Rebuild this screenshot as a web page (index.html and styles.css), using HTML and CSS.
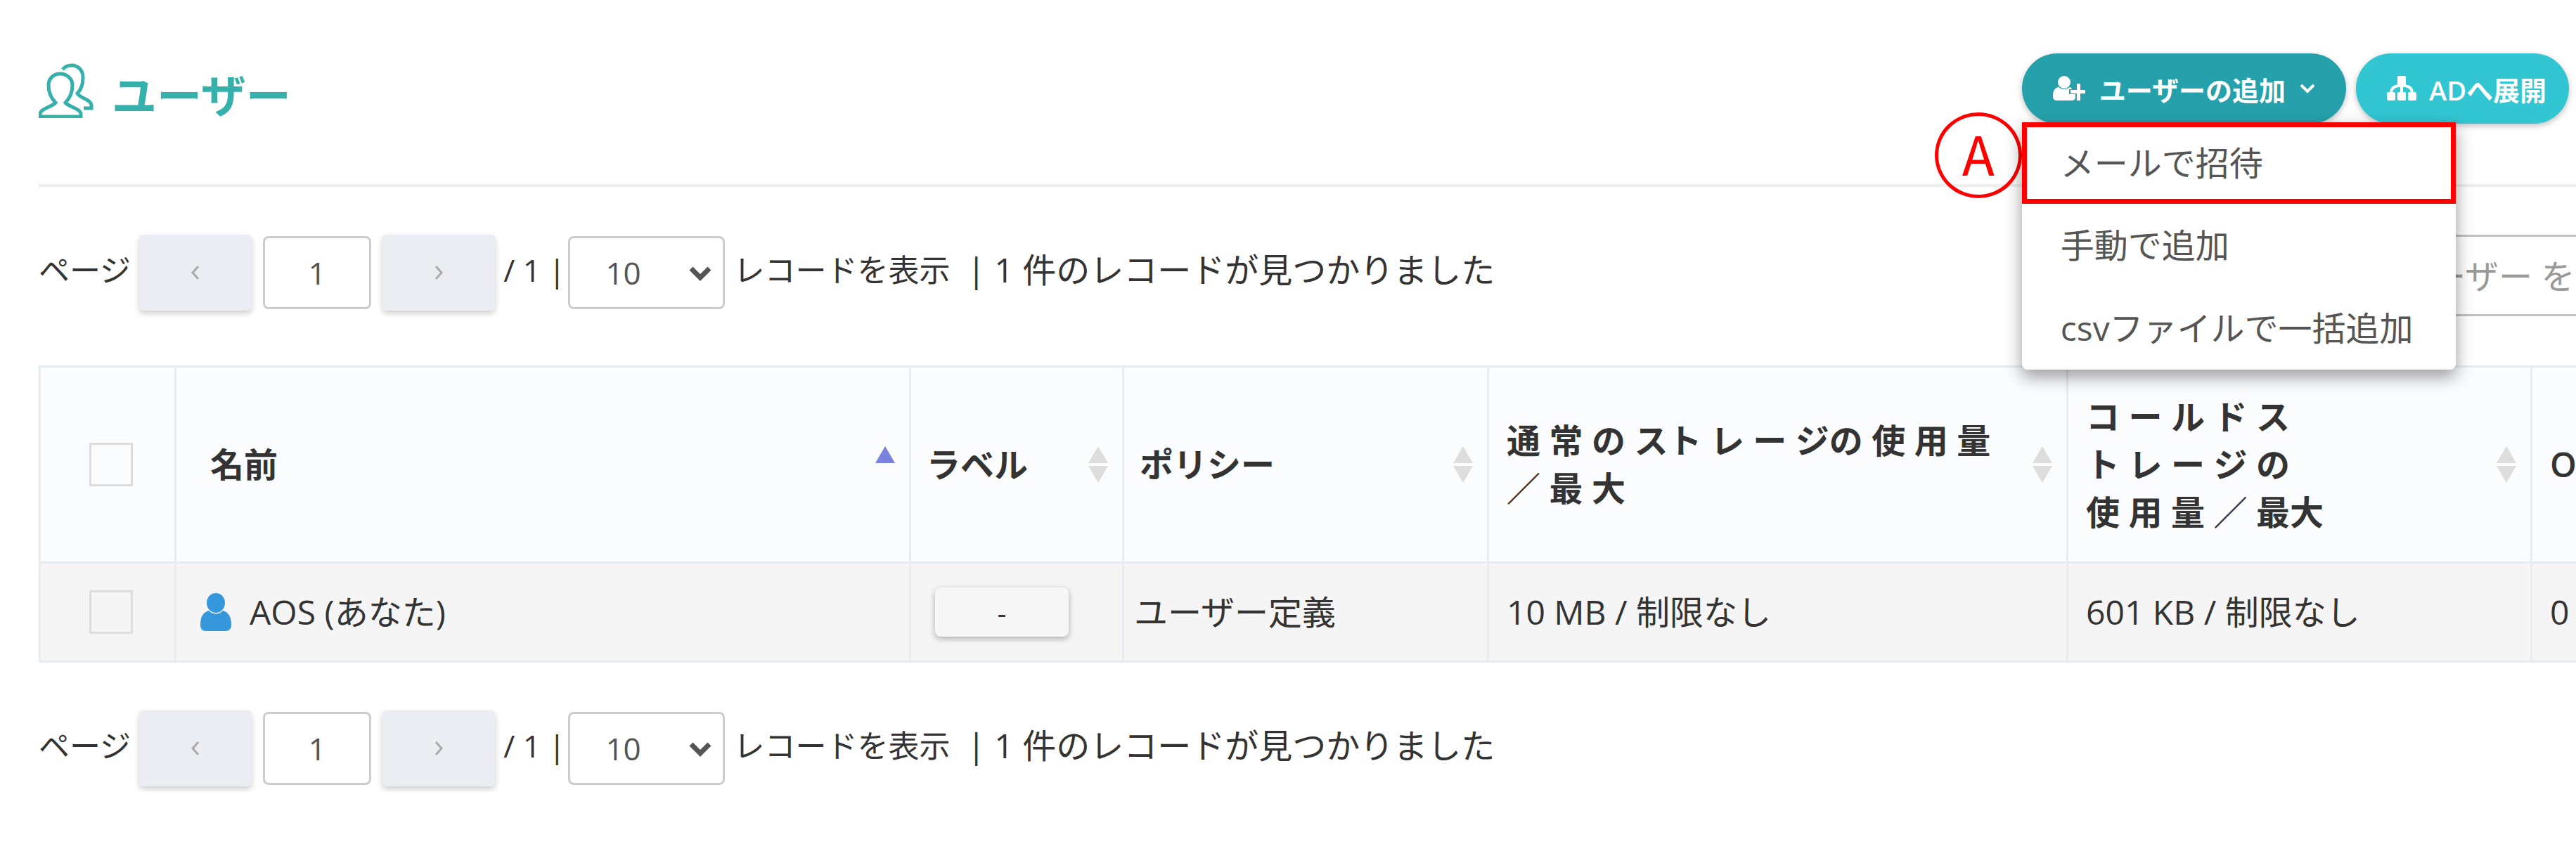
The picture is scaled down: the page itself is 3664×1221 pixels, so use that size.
FILE: index.html
```html
<!DOCTYPE html>
<html lang="ja">
<head>
    <meta charset="UTF-8">
    <meta name="viewport" content="width=device-width, initial-scale=1.0">
    <title>ユーザー</title>
    <link rel="stylesheet" href="styles.css">
</head>
<body>
    <header class="page-header">
        <h1 class="title">
            <svg class="title-icon" viewBox="0 0 78 78">
                <path d="M30.500 15C21 15 14 22 14 31C14 41 18 50 24 56C20 62 3 64 2 72V76H60V72C59 64 42 62 38 56C44 50 48 41 48 31C48 22 40 15 30.500 15Z"/>
                <path d="M34 9C37 5 42 3 47 3C56 3 63 10 63 20C63 30 61 37 55 43C59 50 73 51 75 59V64H64"/>
            </svg>
            ユーザー
        </h1>

        <div class="actions">
            <div class="dropdown">
                <button type="button" class="btn-round btn-add">
                    <svg class="icon-add" viewBox="0 0 46 36">
                        <ellipse cx="16" cy="9" rx="9" ry="9"/>
                        <path d="M8 16C2 17 0 22 0 29C0 33 2 35 6 35H27C29 35 31 34 32 32V26H23V19H27C26 17 25 16 24 16C19 20 13 20 8 16Z"/>
                        <path d="M34 11H39V20H46V25H39V35H34V25H25V20H34Z"/>
                    </svg>
                    <span>ユーザーの追加</span>
                    <svg class="icon-down" viewBox="0 0 22 14"><path d="M2 2L11 11L20 2"/></svg>
                </button>
                <ul class="menu">
                    <li class="marked"><a href="#">メールで招待</a></li>
                    <li><a href="#">手動で追加</a></li>
                    <li><a href="#">csvファイルで一括追加</a></li>
                </ul>
                <span class="marker">A</span>
            </div>
            <button type="button" class="btn-round btn-ad">
                <svg class="icon-tree" viewBox="0 0 42 36">
                    <rect x="15" y="0" width="12" height="13" rx="2"/>
                    <rect x="0" y="23" width="12" height="12" rx="2"/>
                    <rect x="15" y="23" width="12" height="12" rx="2"/>
                    <rect x="30" y="23" width="12" height="12" rx="2"/>
                    <path class="wire" d="M21 12V24M6 24C6 18 10 15 16 14H26C32 15 36 18 36 24"/>
                </svg>
                <span>ADへ展開</span>
            </button>
        </div>
    </header>

    <div class="toolbar">
        <div class="pager">
            <label for="page1">ページ</label>
            <button type="button" class="btn-page" aria-label="前へ"><svg viewBox="0 0 12 22"><path d="M10 2L2 11L10 20"/></svg></button>
            <input type="text" id="page1" class="page-no" value="1">
            <button type="button" class="btn-page" aria-label="次へ"><svg viewBox="0 0 12 22"><path d="M2 2L10 11L2 20"/></svg></button>
            <span class="total">/ 1 |</span>
            <div class="select">
                <select id="size1"><option>10</option><option>20</option></select>
                <svg viewBox="0 0 34 22"><path d="M4 4L17 17L30 4"/></svg>
            </div>
            <label for="size1" class="records">レコードを表示</label>
            <span class="found">| 1 件のレコードが見つかりました</span>
        </div>
        <input type="text" class="search" placeholder="ユーザー を検索" aria-label="検索">
    </div>

    <table class="users">
        <colgroup>
            <col class="col-check">
            <col class="col-name">
            <col class="col-label">
            <col class="col-policy">
            <col class="col-storage">
            <col class="col-cold">
            <col>
        </colgroup>
        <thead>
            <tr>
                <th class="check"><input type="checkbox" aria-label="すべて選択"></th>
                <th class="name"><div class="head">名前<span class="sort asc"></span></div></th>
                <th><div class="head">ラベル<span class="sort"></span></div></th>
                <th><div class="head">ポリシー<span class="sort"></span></div></th>
                <th class="wide"><div class="head"><span>通 常 の スト レ ー ジの 使 用 量<br>／ 最 大</span><span class="sort"></span></div></th>
                <th class="wide"><div class="head"><span>コ ー ル ド ス<br>ト レ ー ジ の<br>使 用 量 ／ 最大</span><span class="sort"></span></div></th>
                <th class="wide">O</th>
            </tr>
        </thead>
        <tbody>
            <tr>
                <td class="check"><input type="checkbox" aria-label="AOSを選択"></td>
                <td class="name">
                    <div class="user">
                        <svg viewBox="0 0 44 54">
                            <ellipse cx="22" cy="14" rx="13" ry="14"/>
                            <path d="M12 25C4 27 0 34 0 45C0 51 3 54 8 54H36C41 54 44 51 44 45C44 34 40 27 32 25C26 31 18 31 12 25Z"/>
                        </svg>
                        AOS (あなた)
                    </div>
                </td>
                <td class="label"><button type="button" class="btn-label">-</button></td>
                <td class="policy">ユーザー定義</td>
                <td class="wide">10 MB / 制限なし</td>
                <td class="wide">601 KB / 制限なし</td>
                <td class="wide">0</td>
            </tr>
        </tbody>
    </table>

    <div class="toolbar">
        <div class="pager">
            <label for="page2">ページ</label>
            <button type="button" class="btn-page" aria-label="前へ"><svg viewBox="0 0 12 22"><path d="M10 2L2 11L10 20"/></svg></button>
            <input type="text" id="page2" class="page-no" value="1">
            <button type="button" class="btn-page" aria-label="次へ"><svg viewBox="0 0 12 22"><path d="M2 2L10 11L2 20"/></svg></button>
            <span class="total">/ 1 |</span>
            <div class="select">
                <select id="size2"><option>10</option><option>20</option></select>
                <svg viewBox="0 0 34 22"><path d="M4 4L17 17L30 4"/></svg>
            </div>
            <label for="size2" class="records">レコードを表示</label>
            <span class="found">| 1 件のレコードが見つかりました</span>
        </div>
    </div>
</body>
</html>
```

FILE: styles.css
```css
* {
    box-sizing: border-box;
}

body {
    margin: 0;
    padding: 76px 0 0 55px;
    background: #fff;
    color: #333;
    font-family: "Open Sans", "Noto Sans CJK JP", sans-serif;
    font-size: 48px;
    line-height: 68px;
    overflow-x: hidden;
}

button,
input,
select {
    font-family: inherit;
    font-size: inherit;
    color: inherit;
}

.page-header {
    display: flex;
    justify-content: space-between;
    align-items: flex-start;
    height: 190px;
    padding-right: 10px;
    border-bottom: 4px solid #eee;
}

.title {
    display: flex;
    align-items: flex-end;
    gap: 26px;
    margin: 14px 0 0;
    font-size: 64px;
    line-height: 64px;
    font-weight: 600;
    color: #35b0ab;
}

.title-icon {
    width: 78px;
    height: 78px;
    fill: none;
    stroke: #35b0ab;
    stroke-width: 5;
}

.actions {
    display: flex;
    gap: 14px;
}

.dropdown {
    position: relative;
}

.btn-round {
    display: flex;
    align-items: center;
    gap: 18px;
    height: 100px;
    padding: 0 44px;
    border: none;
    border-radius: 50px;
    color: #fff;
    font-size: 38px;
    font-weight: 600;
    white-space: nowrap;
    box-shadow: 0 3px 8px rgba(0, 0, 0, 0.25);
}

.btn-round svg {
    fill: #fff;
}

.btn-add {
    gap: 20px;
    background: #26a1ab;
}

.btn-ad {
    background: #32c5d2;
    padding-right: 32px;
}

.icon-add {
    width: 46px;
    height: 36px;
}

.icon-tree {
    width: 42px;
    height: 36px;
}

.icon-tree .wire {
    fill: none;
    stroke: #fff;
    stroke-width: 4;
}

.btn-round .icon-down {
    width: 22px;
    height: 14px;
    fill: none;
    stroke: #fff;
    stroke-width: 4;
}

.menu {
    position: absolute;
    top: 98px;
    left: 0;
    z-index: 2;
    width: 617px;
    margin: 0;
    padding: 0;
    list-style: none;
    background: #fff;
    border-radius: 0 0 8px 8px;
    box-shadow: 0 10px 24px rgba(0, 0, 0, 0.4);
}

.menu a {
    display: block;
    padding: 25px 55px;
    line-height: 68px;
    color: #555;
    text-decoration: none;
    white-space: nowrap;
}

.menu .marked {
    outline: 7px solid #f00;
    outline-offset: -7px;
}

.menu .marked a {
    padding: 24px 55px;
}

.marker {
    position: absolute;
    top: 84px;
    right: 100%;
    width: 124px;
    height: 122px;
    border: 5px solid #f00;
    border-radius: 50%;
    color: #f00;
    font-family: "Noto Sans CJK JP", sans-serif;
    font-size: 76px;
    font-weight: 400;
    line-height: 104px;
    text-align: center;
}

.toolbar {
    display: flex;
    justify-content: space-between;
    align-items: flex-start;
    height: 116px;
    margin-top: 68px;
}

.pager {
    display: flex;
    align-items: center;
    height: 108px;
    white-space: nowrap;
}

.pager label,
.pager span {
    margin-right: 12px;
    padding-bottom: 8px;
}

.pager label,
.pager .total {
    font-size: 44px;
}

.btn-page {
    width: 160px;
    height: 108px;
    border: none;
    border-radius: 6px;
    background: #ebedf2;
    box-shadow: 0 4px 8px rgba(0, 0, 0, 0.2);
}

.btn-page svg {
    display: block;
    width: 12px;
    height: 22px;
    margin: 0 auto;
    fill: none;
    stroke: #aaa;
    stroke-width: 3;
}

.page-no {
    width: 154px;
    height: 104px;
    margin: 0 16px;
    padding: 0;
    border: 3px solid #ccc;
    border-radius: 8px;
    color: #555;
    font-size: 44px;
    text-align: center;
}

.pager .total {
    margin: 0 4px 0 12px;
}

.select {
    position: relative;
}

.select select {
    display: block;
    width: 223px;
    height: 104px;
    padding: 0 50px;
    border: 3px solid #ccc;
    border-radius: 8px;
    background: #fff;
    color: #555;
    font-size: 44px;
    appearance: none;
}

.select svg {
    position: absolute;
    top: 42px;
    right: 18px;
    width: 34px;
    height: 22px;
    fill: none;
    stroke: #555;
    stroke-width: 7;
    pointer-events: none;
}

.pager .records {
    margin: 0 24px 0 12px;
}

.search {
    width: 320px;
    height: 116px;
    margin-right: -40px;
    padding: 0 24px;
    border: 3px solid #c2c2c2;
    border-radius: 8px;
    background: #fff;
}

.search::placeholder {
    color: #999;
    opacity: 1;
}

.users {
    width: 100%;
    margin-top: 70px;
    table-layout: fixed;
    border-collapse: collapse;
}

.col-check {
    width: 193px;
}

.col-name {
    width: 1045px;
}

.col-label {
    width: 303px;
}

.col-policy {
    width: 519px;
}

.col-storage {
    width: 824px;
}

.col-cold {
    width: 660px;
}

.users th,
.users td {
    padding: 0 20px 0 22px;
    border: 3px solid #e7ecf1;
    border-right: none;
    text-align: left;
    white-space: nowrap;
}

.users th {
    height: 279px;
    background: #fbfcfe;
    font-weight: 600;
}

.users td {
    height: 141px;
    background: #f5f5f5;
}

.users .check {
    padding: 0 0 0 10px;
}

.users th.name {
    padding-left: 48px;
}

.users td.name {
    padding-left: 34px;
}

.users .label {
    padding-left: 34px;
}

.users .policy {
    padding-left: 14px;
}

.users .wide {
    padding-left: 25px;
}

.users input {
    display: block;
    width: 62px;
    height: 62px;
    margin: 0 auto;
    border: 3px solid #ddd;
    appearance: none;
}

.head {
    display: flex;
    justify-content: space-between;
    align-items: center;
}

/* up and down arrows of a sortable column */
.sort::before,
.sort::after {
    content: "";
    display: block;
    border: 14px solid transparent;
}

.sort::before {
    border-top: none;
    border-bottom: 24px solid #ddd;
}

.sort::after {
    margin-top: 4px;
    border-bottom: none;
    border-top: 24px solid #ddd;
}

.asc::before {
    border-bottom-color: #7a82dd;
}

.asc::after {
    border-top-color: transparent;
}

.user {
    display: flex;
    align-items: center;
    gap: 26px;
}

.user svg {
    width: 44px;
    height: 54px;
    fill: #3598dc;
}

.btn-label {
    display: block;
    width: 190px;
    height: 70px;
    border: none;
    border-radius: 8px;
    background: #f6f6f6;
    font-size: 40px;
    box-shadow: 0 3px 8px rgba(0, 0, 0, 0.3);
}
```
